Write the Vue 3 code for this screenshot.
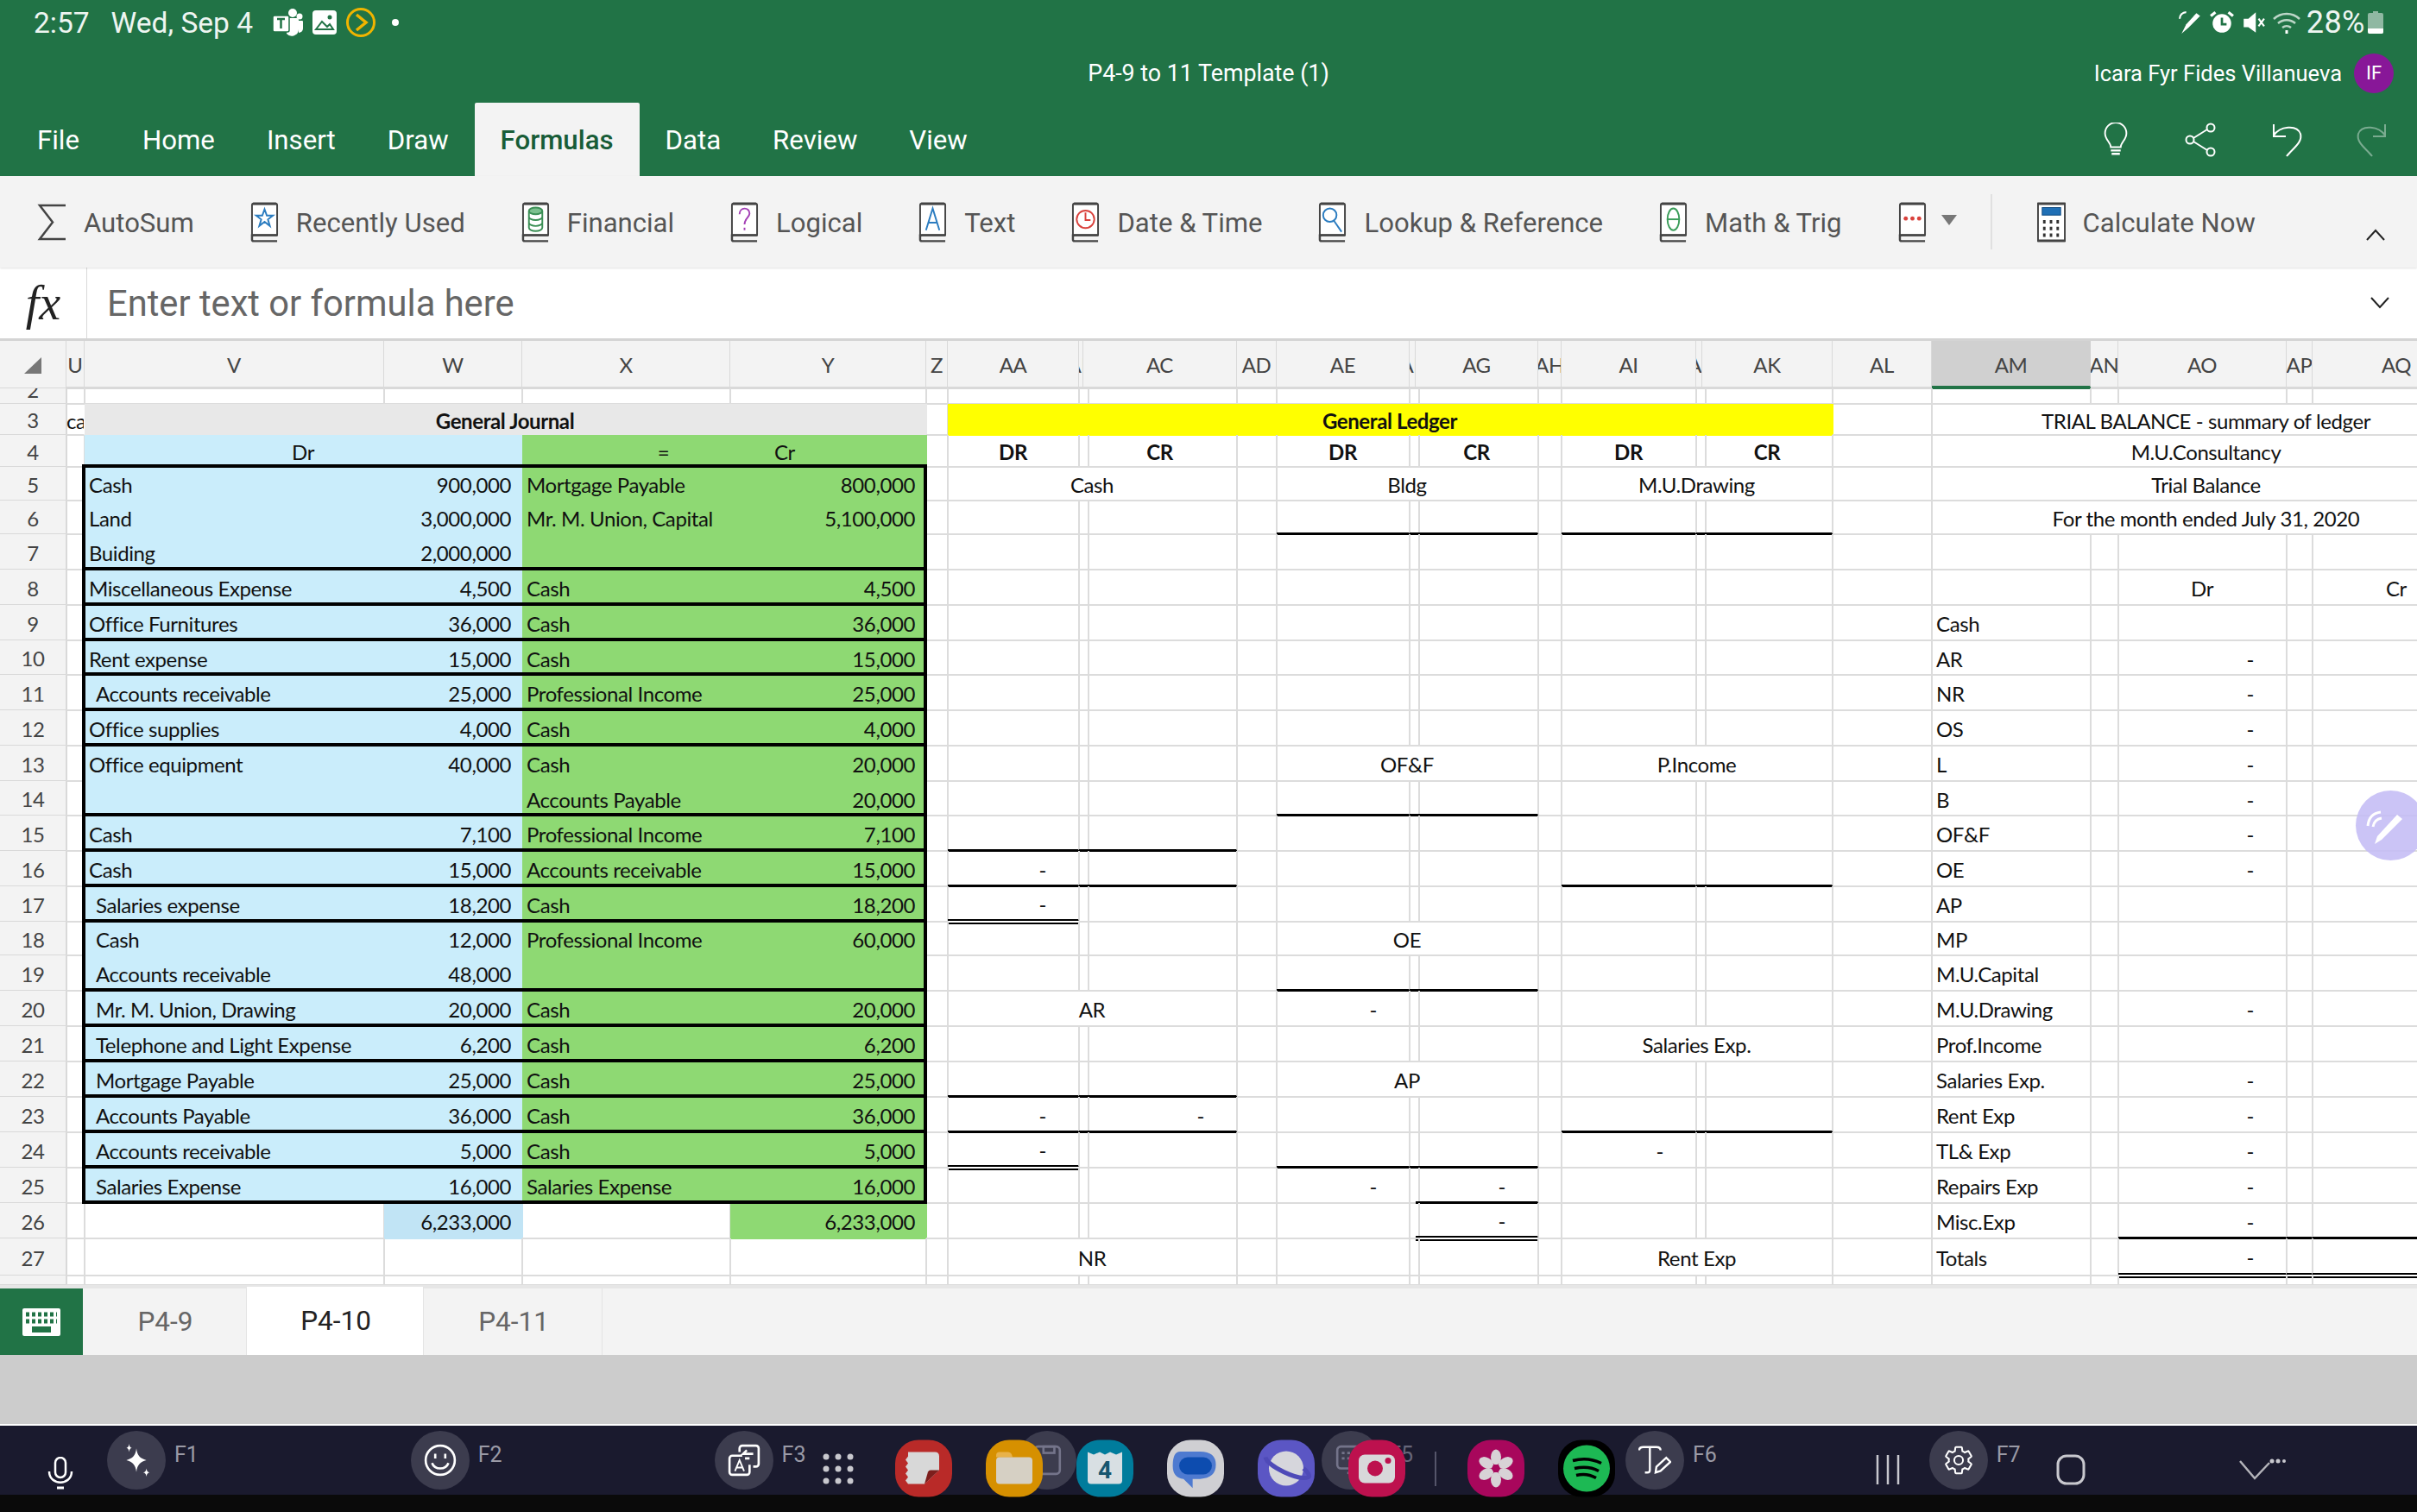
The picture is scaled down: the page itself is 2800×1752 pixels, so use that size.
<template>
  <div class="app">
    <header class="top">
      <div class="status">
        <div class="status-left">
          <span class="time">2:57</span>
          <span class="date">Wed, Sep 4</span>
          <svg class="st-teams" viewBox="0 0 36 34">
            <circle cx="24" cy="6" r="5" fill="#fff" />
            <circle cx="32" cy="10" r="3.5" fill="#fff" />
            <path d="M17 12h12a2 2 0 0 1 2 2v11a8 8 0 0 1-14 5z" fill="#fff" />
            <path d="M30 15h5a1 1 0 0 1 1 1v8a5 5 0 0 1-5 5z" fill="#fff" />
            <rect x="1" y="9" width="19" height="19" rx="2" fill="#fff" stroke="#217346" stroke-width="1.5" />
            <path d="M6 13h9M10.500 13v11" stroke="#217346" stroke-width="2.500" fill="none" />
          </svg>
          <svg class="st-gallery" viewBox="0 0 28 28">
            <rect width="28" height="28" rx="4" fill="#fff" />
            <circle cx="20" cy="8" r="2.500" fill="#217346" />
            <path d="M4 22l7-9 6 6 3-3 4 6z" fill="none" stroke="#217346" stroke-width="2" />
          </svg>
          <svg class="st-play" viewBox="0 0 36 36">
            <circle cx="18" cy="18" r="15.500" fill="none" stroke="#f0b400" stroke-width="3" />
            <path d="M13 9l11 9-11 9" fill="none" stroke="#f0b400" stroke-width="3.500" />
          </svg>
          <span class="st-dot"></span>
        </div>
        <div class="status-right">
          <svg class="st-ico" viewBox="0 0 26 26">
            <path d="M3 25L8 15 19 3l4 3-12 12z" fill="#fff" />
            <path d="M1 9a7 7 0 0 1 7-7" fill="none" stroke="#fff" stroke-width="2" />
          </svg>
          <svg class="st-ico" viewBox="0 0 26 26">
            <circle cx="13" cy="14" r="10" fill="#fff" />
            <path d="M13 8v7h5" fill="none" stroke="#217346" stroke-width="2.500" />
            <path d="M1 6l5-4M25 6l-5-4" stroke="#fff" stroke-width="3" />
          </svg>
          <svg class="st-ico" viewBox="0 0 26 26">
            <path d="M3 9h5l8-7v22l-8-6H3z" fill="#fff" />
            <path d="M19 9l6 8M25 9l-6 8" stroke="#fff" stroke-width="2" />
          </svg>
          <svg class="st-wifi" viewBox="0 0 34 26">
            <path d="M2 9a22 22 0 0 1 30 0M7 14a15 15 0 0 1 20 0M12 19a8 8 0 0 1 10 0" fill="none" stroke="#bcd6c7" stroke-width="2.500" />
            <path d="M17 22v4" stroke="#fff" stroke-width="3" />
          </svg>
          <span class="pct">28%</span>
          <svg class="st-batt" viewBox="0 0 18 26">
            <path d="M6 0h6v2h4a2 2 0 0 1 2 2v20a2 2 0 0 1-2 2H2a2 2 0 0 1-2-2V4a2 2 0 0 1 2-2h4z" fill="#8fb8a2" />
            <path d="M0 20h18v4a2 2 0 0 1-2 2H2a2 2 0 0 1-2-2z" fill="#fff" />
          </svg>
        </div>
      </div>
      <div class="titlebar">
        <div></div>
        <div class="doc-title">P4-9 to 11 Template (1)</div>
        <div class="account">
          <span class="acc-name">Icara Fyr Fides Villanueva</span>
          <span class="avatar">IF</span>
        </div>
      </div>
      <div class="tabrow">
        <nav class="menu">
          <span v-for="tab in menuTabs" :key="tab" :class="['menu-tab', { active: tab === 'Formulas', first: tab === 'File' }]">{{ tab }}</span>
        </nav>
        <div class="quick">
          <svg class="q-ico" viewBox="0 0 32 42">
            <path d="M10 30c0-6-7-9-7-17a13 13 0 0 1 26 0c0 8-7 11-7 17z" fill="none" stroke="#fff" stroke-width="2" />
            <path d="M10 34h12M11 38h10" stroke="#fff" stroke-width="2.500" />
          </svg>
          <svg class="q-ico" viewBox="0 0 40 40">
            <circle cx="31" cy="6" r="4.500" fill="none" stroke="#fff" stroke-width="2" />
            <circle cx="7" cy="20" r="4.500" fill="none" stroke="#fff" stroke-width="2" />
            <circle cx="31" cy="34" r="4.500" fill="none" stroke="#fff" stroke-width="2" />
            <path d="M11 18l16-10M11 22l16 10" stroke="#fff" stroke-width="2" />
          </svg>
          <svg class="q-ico" viewBox="0 0 40 40">
            <path d="M5 2v14h14" fill="none" stroke="#fff" stroke-width="2" />
            <path d="M5 15C12 4 32 2 36 13c3 10-10 18-16 26" fill="none" stroke="#fff" stroke-width="2" />
          </svg>
          <svg class="q-ico dim" viewBox="0 0 40 40">
            <path d="M35 2v14H21" fill="none" stroke="#fff" stroke-width="2" />
            <path d="M35 15C28 4 8 2 4 13c-3 10 10 18 16 26" fill="none" stroke="#fff" stroke-width="2" />
          </svg>
        </div>
      </div>
    </header>

    <section class="ribbon">
      <div class="rib-item">
        <svg class="sigma" viewBox="0 0 34 43">
          <path d="M33 2H3l15 19.500L3 41h30" fill="none" stroke="#444" stroke-width="2.500" />
        </svg>
        <span>AutoSum</span>
      </div>
      <div v-for="item in ribbonItems" :key="item.kind" class="rib-item">
        <svg class="book" viewBox="0 0 34 47">
          <path d="M2 39V3q0-2 2-2h26q2 0 2 2v36z" fill="#fff" stroke="#444" stroke-width="2" />
          <path d="M2 38v6q0 2 2 2h28M32 39H4q-2 0-2 2" fill="none" stroke="#444" stroke-width="2.500" />
          <path d="M3 1.500h28" stroke="#444" stroke-width="3" />
          <path v-if="item.kind === 'recent'" d="M17 8l2.700 7.500H27l-6 4.700 2.300 7.800-6.300-5-6.300 5 2.300-7.800-6-4.700h7.300z" fill="none" stroke="#2b7cc0" stroke-width="2" />
          <g v-else-if="item.kind === 'financial'" fill="none" stroke="#3b8f55" stroke-width="2">
            <ellipse cx="17" cy="10" rx="8" ry="4" fill="#7cc08f" />
            <path d="M9 10v20a8 4 0 0 0 16 0V10M9 17a8 4 0 0 0 16 0M9 24a8 4 0 0 0 16 0" />
          </g>
          <g v-else-if="item.kind === 'logical'" fill="none" stroke="#a33fb5" stroke-width="2">
            <path d="M11 14c0-9 12-9 12-1 0 5-6 6-6 13" />
            <path d="M17 30v3" />
          </g>
          <path v-else-if="item.kind === 'text'" d="M9 33L17 7l8 26M12 24h10" fill="none" stroke="#2b7cc0" stroke-width="2" />
          <g v-else-if="item.kind === 'date'" fill="none" stroke="#d9423d" stroke-width="2">
            <circle cx="17" cy="20" r="10.500" />
            <path d="M17 12v9h6" />
          </g>
          <g v-else-if="item.kind === 'lookup'" fill="none" stroke="#2b7cc0" stroke-width="2">
            <circle cx="14" cy="15" r="8" />
            <path d="M19 22l9 13" />
          </g>
          <g v-else-if="item.kind === 'math'" fill="none" stroke="#3b9d5a" stroke-width="2">
            <ellipse cx="17" cy="20" rx="7" ry="13" />
            <path d="M10 20h14" />
          </g>
          <g v-else-if="item.kind === 'more'" fill="#d9423d">
            <circle cx="9" cy="19" r="2.500" />
            <circle cx="17" cy="19" r="2.500" />
            <circle cx="25" cy="19" r="2.500" />
          </g>
        </svg>
        <span v-if="item.label">{{ item.label }}</span>
      </div>
      <svg class="caret" viewBox="0 0 18 12"><path d="M0 0h18l-9 12z" fill="#777" /></svg>
      <span class="rib-div"></span>
      <div class="rib-item">
        <svg class="book" viewBox="0 0 34 47">
          <rect x="1" y="1" width="32" height="45" fill="#fff" stroke="#444" stroke-width="2" />
          <path d="M1 1.500h32M1 45.500h32" stroke="#444" stroke-width="3" />
          <rect x="6" y="6" width="22" height="9" fill="#1f6fb5" stroke="#104a80" />
          <path d="M7 23h20M7 31h20M7 39h20" stroke="#333" stroke-width="4" stroke-dasharray="3 5" />
        </svg>
        <span>Calculate Now</span>
      </div>
      <svg class="collapse" viewBox="0 0 24 14"><path d="M2 13L12 2l10 11" fill="none" stroke="#222" stroke-width="2" /></svg>
    </section>

    <section class="formula">
      <div class="fx">fx</div>
      <div class="formula-input">Enter text or formula here</div>
      <svg class="expand" viewBox="0 0 24 14"><path d="M2 1l10 11L22 1" fill="none" stroke="#222" stroke-width="2" /></svg>
    </section>

    <main class="sheet">
      <div class="grid">
        <div class="corner"><svg viewBox="0 0 20 19"><path d="M0 19L20 0v19z" fill="#777" /></svg></div>
        <div v-for="col in columns" :key="col.name" :class="['col-head', { selected: col.name === 'AM' }]">{{ col.name }}</div>
        <template v-for="row in rows" :key="row.num">
          <div :class="['row-head', { clipped: row.num === 2 }]">{{ row.num === 28 ? '' : row.num }}</div>
          <div
            v-for="cell in row.cells"
            :key="cell.col"
            :class="['cell', cell.cls]"
            :style="cell.span > 1 ? { gridColumn: 'span ' + cell.span } : null"
          >{{ cell.text }}</div>
        </template>
        <div
          v-for="b in blocks"
          :key="b[0]"
          class="block"
          :style="{ gridRow: b[0] + ' / ' + (b[1] + 1), gridColumn: '3 / 7' }"
        ></div>
      </div>
      <div class="pen-float">
        <svg viewBox="0 0 50 50">
          <path d="M10 46l3-9L36 12l6 5-24 24z" fill="#fff" />
          <path d="M2 25C3 15 8 10 17 9M8 26c1-6 4-9 10-10" fill="none" stroke="#fff" stroke-width="3" />
        </svg>
      </div>
    </main>

    <footer class="sheetbar">
      <div class="kbd-btn">
        <svg viewBox="0 0 44 32">
          <rect width="44" height="32" rx="2" fill="#fff" />
          <path d="M4 7h36M4 15h36" stroke="#217346" stroke-width="5" stroke-dasharray="4 3" />
          <rect x="11" y="21" width="22" height="7" fill="#217346" />
        </svg>
      </div>
      <div class="sheet-tab">P4-9</div>
      <div class="sheet-tab current">P4-10</div>
      <div class="sheet-tab">P4-11</div>
    </footer>

    <div class="gap"></div>

    <div class="sysbar">
      <div class="fkeys">
        <svg class="mic" viewBox="0 0 30 38">
          <rect x="9" y="1" width="12" height="23" rx="6" fill="none" stroke="#fff" stroke-width="2.500" />
          <path d="M2 17c0 17 26 17 26 0" fill="none" stroke="#fff" stroke-width="2.500" />
          <path d="M11 36h8" stroke="#fff" stroke-width="3" />
        </svg>
        <div class="fkey">
          <span class="fcircle">
            <svg viewBox="0 0 36 36" fill="#fff">
              <path d="M18 5c1 8 4 11 11 13-7 2-10 5-11 13-1-8-4-11-11-13 7-2 10-5 11-13z" />
              <path d="M10 0c.4 3 1 4 3 4.500-2 .5-2.600 1.500-3 4.500-.4-3-1-4-3-4.500 2-.5 2.600-1.500 3-4.500zM29 27c.4 3 1.200 4 3.500 4.500-2.300.5-3.100 1.500-3.500 4.500-.4-3-1.200-4-3.500-4.500 2.300-.5 3.100-1.500 3.500-4.500z" />
            </svg>
          </span>
          <span class="flabel">F1</span>
        </div>
        <div class="fkey">
          <span class="fcircle">
            <svg viewBox="0 0 36 36" fill="none" stroke="#fff" stroke-width="2.500">
              <circle cx="18" cy="18" r="16" />
              <path d="M9 21c3 8 15 8 18 0" />
              <path d="M12.500 11v5M23.500 11v5" />
            </svg>
          </span>
          <span class="flabel">F2</span>
        </div>
        <div class="fkey">
          <span class="fcircle">
            <svg viewBox="0 0 36 36" fill="none" stroke="#fff" stroke-width="2.500">
              <path d="M13 9V5a3 3 0 0 1 3-3h15a3 3 0 0 1 3 3v17a3 3 0 0 1-3 3h-3" />
              <path d="M16 13H5a3 3 0 0 0-3 3v15a3 3 0 0 0 3 3h16a3 3 0 0 0 3-3v-8" />
              <path d="M28 11H17l4-4M24 16h-5" />
              <path d="M8 30l5-12 5 12M10 26h6" stroke-width="1.800" />
            </svg>
          </span>
          <span class="flabel">F3</span>
        </div>
        <div class="fkey muted">
          <span class="fcircle">
            <svg viewBox="0 0 36 36" fill="none" stroke="#74748a" stroke-width="2.500">
              <rect x="4" y="3" width="28" height="30" rx="4" />
              <rect x="14" y="3" width="12" height="7" />
            </svg>
          </span>
          <span class="flabel">F4</span>
        </div>
        <div class="fkey muted">
          <span class="fcircle">
            <svg viewBox="0 0 36 36" fill="none" stroke="#74748a" stroke-width="2.500">
              <rect x="3" y="3" width="30" height="24" rx="4" />
              <path d="M8 10h20M8 16h20" stroke-dasharray="3 3" />
              <path d="M14 32h8" />
            </svg>
          </span>
          <span class="flabel">F5</span>
        </div>
        <div class="fkey">
          <span class="fcircle">
            <svg viewBox="0 0 40 36" fill="none" stroke="#fff" stroke-width="2.500">
              <path d="M1 6c0-3 2-4 5-4h16c3 0 5 1 5 4M14 2v28c0 2-1 3-3 3H8" />
              <path d="M21 33l1-7 12-11 5 5-12 11z" />
            </svg>
          </span>
          <span class="flabel">F6</span>
        </div>
        <div class="fkey">
          <span class="fcircle">
            <svg viewBox="0 0 24 24" fill="none" stroke="#fff" stroke-width="1.300">
              <path d="M19.140 12.940c.04-.3.06-.61.06-.94 0-.32-.02-.64-.07-.94l2.030-1.580a.49.49 0 0 0 .12-.61l-1.920-3.320a.488.488 0 0 0-.59-.22l-2.390.96c-.5-.38-1.030-.7-1.620-.94l-.36-2.540a.484.484 0 0 0-.48-.41h-3.840c-.24 0-.43.17-.47.41l-.36 2.540c-.59.24-1.130.57-1.620.94l-2.390-.96c-.22-.08-.47 0-.59.22L2.740 8.870c-.12.21-.08.47.12.61l2.030 1.580c-.05.3-.09.63-.09.94s.02.64.07.94l-2.030 1.580a.49.49 0 0 0-.12.61l1.920 3.320c.12.22.37.29.59.22l2.390-.96c.5.38 1.030.7 1.620.94l.36 2.540c.05.24.24.41.48.41h3.840c.24 0 .44-.17.47-.41l.36-2.540c.59-.24 1.130-.56 1.620-.94l2.390.96c.22.08.47 0 .59-.22l1.920-3.320c.12-.22.07-.47-.12-.61l-2.010-1.580z" />
              <circle cx="12" cy="12" r="3.200" />
            </svg>
          </span>
          <span class="flabel">F7</span>
        </div>
      </div>

      <div class="dock">
        <svg class="dots" viewBox="0 0 36 36" fill="#c8c8ce">
          <template v-for="y in [4, 18, 32]" :key="y">
            <circle cx="4" :cy="y" r="3.500" />
            <circle cx="18" :cy="y" r="3.500" />
            <circle cx="32" :cy="y" r="3.500" />
          </template>
        </svg>
        <svg class="app-ico" viewBox="0 0 66 66">
          <rect width="66" height="66" rx="27" fill="#b92a28" />
          <path d="M15 14h31q5 0 5 5v16L34 51H15l-3-4 3-4-3-4 3-4-3-4 3-4-3-4 3-4z" fill="#d8d8d8" />
          <path d="M34 51l4-14q1-2 3-2h10z" fill="#7d1e1c" />
        </svg>
        <svg class="app-ico" viewBox="0 0 66 66">
          <rect width="66" height="66" rx="27" fill="#d69000" />
          <path d="M12 18q0-4 4-4h10q4 0 5 6h-19z" fill="#e8b24a" />
          <rect x="12" y="20" width="42" height="31" rx="4" fill="#d6d0c4" />
        </svg>
        <svg class="app-ico" viewBox="0 0 66 66">
          <rect width="66" height="66" rx="27" fill="#007c9c" />
          <path d="M13 14l7 3 7-3 6 3 6-3 7 3 7-3v33q0 4-4 4H17q-4 0-4-4z" fill="#d8dfe3" />
          <text x="33" y="44" text-anchor="middle" class="cal-num">4</text>
        </svg>
        <svg class="app-ico" viewBox="0 0 66 66">
          <rect width="66" height="66" rx="27" fill="#cfcfd3" />
          <path d="M19 13h24q19 0 19 16t-19 17H34v11l-11-11q-13-1-13-16 0-17 9-17z" transform="translate(-3 1) scale(.96)" fill="#4e7ad0" />
          <rect x="14" y="20" width="38" height="20" rx="10" fill="#0d4caf" />
        </svg>
        <svg class="app-ico" viewBox="0 0 66 66">
          <rect width="66" height="66" rx="27" fill="#5b56c4" />
          <circle cx="33" cy="33" r="20" fill="#d6d6dc" />
          <path d="M9 20c2 10 38 28 50 23 2-2-2-7-6-10" fill="none" stroke="#4f4ab8" stroke-width="5" />
        </svg>
        <svg class="app-ico" viewBox="0 0 66 66">
          <rect width="66" height="66" rx="27" fill="#bd114e" />
          <rect x="12" y="17" width="42" height="33" rx="7" fill="#d8d8da" />
          <circle cx="31" cy="33" r="9" fill="#bd114e" />
          <circle cx="46" cy="24" r="3.500" fill="#bd114e" />
        </svg>
        <span class="dock-div"></span>
        <svg class="app-ico" viewBox="0 0 66 66">
          <rect width="66" height="66" rx="27" fill="#a8075c" />
          <g fill="#d8d2d6">
            <ellipse v-for="a in [0, 60, 120, 180, 240, 300]" :key="a" cx="33" cy="20" rx="6" ry="9" :transform="'rotate(' + a + ' 33 33)'" />
          </g>
          <circle cx="33" cy="33" r="4.500" fill="#a8075c" />
        </svg>
        <svg class="app-ico" viewBox="0 0 66 66">
          <rect width="66" height="66" rx="27" fill="#000" />
          <circle cx="33" cy="33" r="27" fill="#1db954" />
          <path d="M17 24c11-3 23-2 33 3M19 33c9-2 19-2 28 3M21 41c8-2 16-1 23 3" fill="none" stroke="#000" stroke-width="3.500" />
        </svg>
        <svg class="nav-recent" viewBox="0 0 30 36">
          <path d="M3 1v34M15 1v34M27 1v34" stroke="#c8c8ce" stroke-width="2.500" />
        </svg>
        <svg class="nav-home" viewBox="0 0 34 36">
          <rect x="2" y="2" width="30" height="32" rx="10" fill="none" stroke="#c8c8ce" stroke-width="3" />
        </svg>
        <svg class="nav-back" viewBox="0 0 54 26">
          <path d="M1 3l17 20L35 5" fill="none" stroke="#b4b4ba" stroke-width="2.500" />
          <circle cx="38" cy="3" r="2.500" fill="#c8c8ce" />
          <circle cx="45" cy="3" r="2.500" fill="#c8c8ce" />
          <circle cx="52" cy="3" r="2" fill="#c8c8ce" />
        </svg>
      </div>
    </div>
  </div>
</template>

<script setup>
const menuTabs = ['File', 'Home', 'Insert', 'Draw', 'Formulas', 'Data', 'Review', 'View']

const ribbonItems = [
  { kind: 'recent', label: 'Recently Used' },
  { kind: 'financial', label: 'Financial' },
  { kind: 'logical', label: 'Logical' },
  { kind: 'text', label: 'Text' },
  { kind: 'date', label: 'Date & Time' },
  { kind: 'lookup', label: 'Lookup & Reference' },
  { kind: 'math', label: 'Math & Trig' },
  { kind: 'more', label: '' }
]

const columns = [
  { name: 'U', w: 21 }, { name: 'V', w: 347 }, { name: 'W', w: 160 }, { name: 'X', w: 241 },
  { name: 'Y', w: 227 }, { name: 'Z', w: 25 }, { name: 'AA', w: 152 }, { name: 'AB', w: 5 },
  { name: 'AC', w: 178 }, { name: 'AD', w: 46 }, { name: 'AE', w: 154 }, { name: 'AF', w: 7 },
  { name: 'AG', w: 142 }, { name: 'AH', w: 27 }, { name: 'AI', w: 156 }, { name: 'AJ', w: 7 },
  { name: 'AK', w: 151 }, { name: 'AL', w: 115 }, { name: 'AM', w: 184 }, { name: 'AN', w: 32 },
  { name: 'AO', w: 195 }, { name: 'AP', w: 30 }, { name: 'AQ', w: 195 }
]
const colNames = columns.map(c => c.name)

const rowHeights = {
  2: 18, 3: 36, 4: 37, 5: 39, 6: 39, 7: 41, 8: 41, 9: 41, 10: 40, 11: 41, 12: 41, 13: 41, 14: 40,
  15: 41, 16: 41, 17: 41, 18: 39, 19: 41, 20: 41, 21: 41, 22: 41, 23: 41, 24: 41, 25: 41, 26: 41, 27: 43, 28: 11
}

const gridCols = '77px ' + columns.map(c => c.w + 'px').join(' ')
const gridRows = '55px ' + Object.values(rowHeights).map(h => h + 'px').join(' ')

// sheet contents, keyed by "row:col"
const sheet = {}
const put = (row, col, patch) => {
  const key = row + ':' + col
  sheet[key] = { ...sheet[key], ...patch, cls: [sheet[key]?.cls, patch.cls].filter(Boolean).join(' ') }
}

// general journal: label, amount, label, amount, indent
const journal = [
  [5, 'Cash', '900,000', 'Mortgage Payable', '800,000'],
  [6, 'Land', '3,000,000', 'Mr. M. Union, Capital', '5,100,000'],
  [7, 'Buiding', '2,000,000', '', ''],
  [8, 'Miscellaneous Expense', '4,500', 'Cash', '4,500'],
  [9, 'Office Furnitures', '36,000', 'Cash', '36,000'],
  [10, 'Rent expense', '15,000', 'Cash', '15,000'],
  [11, 'Accounts receivable', '25,000', 'Professional Income', '25,000', true],
  [12, 'Office supplies', '4,000', 'Cash', '4,000'],
  [13, 'Office equipment', '40,000', 'Cash', '20,000'],
  [14, '', '', 'Accounts Payable', '20,000'],
  [15, 'Cash', '7,100', 'Professional Income', '7,100'],
  [16, 'Cash', '15,000', 'Accounts receivable', '15,000'],
  [17, 'Salaries expense', '18,200', 'Cash', '18,200', true],
  [18, 'Cash', '12,000', 'Professional Income', '60,000', true],
  [19, 'Accounts receivable', '48,000', '', '', true],
  [20, 'Mr. M. Union, Drawing', '20,000', 'Cash', '20,000', true],
  [21, 'Telephone and Light Expense', '6,200', 'Cash', '6,200', true],
  [22, 'Mortgage Payable', '25,000', 'Cash', '25,000', true],
  [23, 'Accounts Payable', '36,000', 'Cash', '36,000', true],
  [24, 'Accounts receivable', '5,000', 'Cash', '5,000', true],
  [25, 'Salaries Expense', '16,000', 'Salaries Expense', '16,000', true]
]
journal.forEach(([r, a, b, c, d, indent]) => {
  put(r, 'V', { text: a, cls: 'blue' + (indent ? ' indent' : '') })
  put(r, 'W', { text: b, cls: 'blue right' })
  put(r, 'X', { text: c, cls: 'green' })
  put(r, 'Y', { text: d, cls: 'green right' })
})

put(3, 'U', { text: 'ca', cls: 'flush' })
put(3, 'V', { text: 'General Journal', span: 4, cls: 'grey bold center' })
put(4, 'V', { text: 'Dr', span: 2, cls: 'blue center' })
put(4, 'X', { text: '=', cls: 'green eq' })
put(4, 'Y', { text: 'Cr', cls: 'green cr-head' })
put(26, 'W', { text: '6,233,000', cls: 'total-blue right' })
put(26, 'Y', { text: '6,233,000', cls: 'green right' })

// general ledger
put(3, 'AA', { text: 'General Ledger', span: 11, cls: 'yellow bold center' })
;['AA', 'AC', 'AE', 'AG', 'AI', 'AK'].forEach((c, i) => {
  put(4, c, { text: i % 2 ? 'CR' : 'DR', cls: 'bold center' })
})
const accounts = [
  [5, 'AA', 'Cash'], [5, 'AE', 'Bldg'], [5, 'AI', 'M.U.Drawing'], [13, 'AE', 'OF&F'], [13, 'AI', 'P.Income'],
  [18, 'AE', 'OE'], [20, 'AA', 'AR'], [21, 'AI', 'Salaries Exp.'], [22, 'AE', 'AP'], [27, 'AA', 'NR'], [27, 'AI', 'Rent Exp']
]
accounts.forEach(([r, c, text]) => put(r, c, { text, span: 3, cls: 'center' }))

const dashes = [
  [16, 'AA'], [17, 'AA'], [20, 'AE'], [23, 'AA'], [23, 'AC'], [24, 'AA'], [24, 'AI'], [25, 'AE'], [25, 'AG'], [26, 'AG'],
  ...[10, 11, 12, 13, 14, 15, 16, 20, 22, 23, 24, 25, 26, 27].map(r => [r, 'AO'])
]
dashes.forEach(([r, c]) => put(r, c, { text: '-', cls: 'dash' }))

// rules under ledger rows
const rule = (row, from, to, cls) => {
  const a = colNames.indexOf(from)
  const b = colNames.indexOf(to)
  colNames.slice(a, b + 1).forEach(c => put(row, c, { cls }))
}
rule(6, 'AE', 'AG', 'line')
rule(6, 'AI', 'AK', 'line')
rule(14, 'AE', 'AG', 'line')
rule(15, 'AA', 'AC', 'line')
rule(16, 'AA', 'AC', 'line')
rule(16, 'AI', 'AK', 'line')
rule(17, 'AA', 'AA', 'double')
rule(19, 'AE', 'AG', 'line')
rule(22, 'AA', 'AC', 'line')
rule(23, 'AA', 'AC', 'line')
rule(23, 'AI', 'AK', 'line')
rule(24, 'AA', 'AA', 'double')
rule(24, 'AE', 'AG', 'line')
rule(25, 'AG', 'AG', 'line')
rule(26, 'AG', 'AG', 'double')
rule(26, 'AO', 'AQ', 'line')
rule(27, 'AO', 'AQ', 'double')

// trial balance
;[[3, 'TRIAL BALANCE - summary of ledger'], [4, 'M.U.Consultancy'], [5, 'Trial Balance'], [6, 'For the month ended July 31, 2020']]
  .forEach(([r, text]) => put(r, 'AM', { text, span: 5, cls: 'center' }))
put(8, 'AO', { text: 'Dr', cls: 'center' })
put(8, 'AQ', { text: 'Cr', cls: 'center' })
;['Cash', 'AR', 'NR', 'OS', 'L', 'B', 'OF&F', 'OE', 'AP', 'MP', 'M.U.Capital', 'M.U.Drawing', 'Prof.Income',
  'Salaries Exp.', 'Rent Exp', 'TL& Exp', 'Repairs Exp', 'Misc.Exp', 'Totals'].forEach((text, i) => put(9 + i, 'AM', { text }))

const rows = Object.keys(rowHeights).map(Number).map(num => {
  const cells = []
  for (let i = 0; i < colNames.length;) {
    const col = colNames[i]
    const c = sheet[num + ':' + col] || {}
    const span = c.span || 1
    cells.push({ col, span, text: c.text || '', cls: c.cls || '' })
    i += span
  }
  return { num, cells }
})

// rows framed in black in the journal; the grid line number equals the sheet row number
const blocks = [[5, 7], [8, 8], [9, 9], [10, 10], [11, 11], [12, 12], [13, 14], [15, 15], [16, 16], [17, 17],
  [18, 19], [20, 20], [21, 21], [22, 22], [23, 23], [24, 24], [25, 25]]
</script>

<style>
html,
body {
  margin: 0;
  background: #fff;
}
</style>

<style scoped>
.app {
  width: 2800px;
  height: 1752px;
  overflow: hidden;
  display: flex;
  flex-direction: column;
  font-family: Roboto, "Liberation Sans", sans-serif;
  position: relative;
}

.top {
  height: 204px;
  background: #217346;
  color: #fff;
  flex: none;
  display: flex;
  flex-direction: column;
}

.status {
  height: 52px;
  display: flex;
  justify-content: space-between;
  align-items: center;
  font-size: 33.500px;
  color: #eef5f1;
}

.status-left {
  display: flex;
  align-items: center;
  padding-left: 39px;
}

.time {
  margin-right: 25px;
}

.st-teams {
  width: 36px;
  height: 34px;
  margin-left: 22px;
}

.st-gallery {
  width: 28px;
  height: 28px;
  margin-left: 11px;
}

.st-play {
  width: 36px;
  height: 36px;
  margin-left: 10px;
}

.st-dot {
  width: 8px;
  height: 8px;
  border-radius: 50%;
  background: #fff;
  margin-left: 18px;
}

.status-right {
  display: flex;
  align-items: center;
  padding-right: 39px;
}

.st-ico {
  width: 28px;
  height: 28px;
  margin-right: 8px;
}

.st-wifi {
  width: 34px;
  height: 26px;
  margin-right: 6px;
}

.pct {
  font-size: 36px;
  letter-spacing: 0.5px;
}

.st-batt {
  width: 18px;
  height: 26px;
  margin-left: 3px;
}

.titlebar {
  height: 65px;
  margin-bottom: 2px;
  display: grid;
  grid-template-columns: 1fr auto 1fr;
  align-items: center;
}

.doc-title {
  font-size: 26.800px;
}

.account {
  display: flex;
  justify-content: flex-end;
  align-items: center;
  padding-right: 27px;
  gap: 14px;
  font-size: 25.500px;
}

.avatar {
  width: 46px;
  height: 46px;
  border-radius: 50%;
  background: #881798;
  display: flex;
  align-items: center;
  justify-content: center;
  font-size: 22px;
}

.tabrow {
  flex: 1;
  display: flex;
  justify-content: space-between;
}

.menu {
  display: flex;
  padding-left: 13px;
  font-size: 31.200px;
}

.menu-tab {
  padding: 2px 30px 0;
  display: flex;
  align-items: center;
}

.menu-tab.first {
  margin-right: 13px;
}

.menu-tab.active {
  background: #f3f3f3;
  color: #185c37;
  font-weight: 500;
  border-radius: 2px 2px 0 0;
}

.quick {
  display: flex;
  align-items: center;
  padding-right: 32px;
  gap: 59px;
}

.q-ico {
  width: 40px;
  height: 40px;
}

.q-ico.dim {
  opacity: 0.4;
}

.ribbon {
  height: 106px;
  flex: none;
  background: #f3f3f3;
  display: flex;
  align-items: center;
  padding-left: 43px;
  gap: 65px;
  position: relative;
  box-shadow: 0 1px 2px rgba(0, 0, 0, 0.12);
  z-index: 1;
  font-size: 31.100px;
  color: #555;
  box-sizing: border-box;
}

.rib-item {
  display: flex;
  align-items: center;
  gap: 20px;
  flex: none;
}

.rib-item span {
  padding-top: 3px;
}

.sigma {
  width: 34px;
  height: 43px;
}

.book {
  width: 33px;
  height: 47px;
}

.caret {
  width: 18px;
  height: 12px;
  margin-left: -48px;
  margin-bottom: 4px;
}

.rib-div {
  width: 2px;
  height: 64px;
  background: #e0e0e0;
  margin: 0 -13px 0 -26px;
}

.collapse {
  width: 24px;
  height: 14px;
  position: absolute;
  right: 36px;
  top: 61px;
}

.formula {
  height: 85px;
  box-sizing: border-box;
  flex: none;
  background: #fff;
  border-bottom: 3px solid #d4d4d4;
  display: flex;
  align-items: center;
}

.fx {
  width: 101px;
  height: 100%;
  box-sizing: border-box;
  border-right: 1px solid #d9d9d9;
  font-family: "Liberation Serif", serif;
  font-style: italic;
  font-size: 56px;
  color: #222;
  display: flex;
  align-items: center;
  justify-content: center;
}

.formula-input {
  flex: 1;
  padding-left: 23px;
  font-size: 41.700px;
  color: #666;
}

.expand {
  width: 24px;
  height: 14px;
  margin-right: 31px;
}

.sheet {
  height: 1094px;
  flex: none;
  overflow: hidden;
  position: relative;
  background: #fff;
}

.grid {
  display: grid;
  position: relative;
  width: max-content;
  grid-template-columns: v-bind(gridCols);
  grid-template-rows: v-bind(gridRows);
  font-family: Lato, "Liberation Sans", sans-serif;
  font-size: 24px;
  letter-spacing: -0.4px;
  color: #111;
}

.corner,
.col-head,
.row-head {
  background: #f3f3f3;
  color: #444;
  display: flex;
  align-items: center;
  justify-content: center;
  box-sizing: border-box;
  overflow: hidden;
  white-space: nowrap;
  padding-top: 2px;
  margin: 0 -1px -1px 0;
  border-right: 2px solid #d9d9d9;
  border-bottom: 2px solid #d9d9d9;
}

.corner svg {
  width: 20px;
  height: 19px;
}

.col-head {
  border-bottom-width: 3px;
}

.col-head.selected {
  background: #d0d0d0;
  border-right-color: #d0d0d0;
  border-bottom: 4px solid #217346;
}

.row-head.clipped {
  align-items: flex-start;
  line-height: 4px;
  padding-top: 0;
}

.cell {
  display: flex;
  align-items: center;
  box-sizing: border-box;
  white-space: nowrap;
  overflow: hidden;
  padding: 3px 5px 0;
  margin: 0 -1px -1px 0;
  border-right: 2px solid #dcdcdc;
  border-bottom: 2px solid #dcdcdc;
}

.flush {
  padding-left: 0;
  padding-right: 0;
  border-right-color: transparent;
}

.indent {
  padding-left: 13px;
}

.right {
  justify-content: flex-end;
  padding-right: 12px;
}

.center {
  justify-content: center;
}

.bold {
  font-weight: 700;
}

.dash {
  justify-content: flex-end;
  padding-right: 37px;
}

.blue,
.green,
.grey,
.yellow,
.total-blue {
  border-color: transparent;
}

.blue {
  background: #caedfb;
}

.total-blue {
  background: #c1e4f5;
}

.green {
  background: #8ed973;
}

.grey {
  background: #e8e8e8;
}

.yellow {
  background: #ffff00;
}

.eq {
  justify-content: center;
  padding-left: 92px;
}

.cr-head {
  justify-content: center;
  padding-right: 105px;
}

.line {
  border-bottom: 3px solid #000;
  margin-bottom: -1px;
}

.double {
  border-bottom: 6px double #000;
  margin-bottom: -3px;
}

.block {
  position: absolute;
  inset: -3px -1px -1px -3px;
  border: 4px solid #000;
  pointer-events: none;
}

.pen-float {
  position: absolute;
  left: 2729px;
  top: 521px;
  width: 81px;
  height: 81px;
  border-radius: 50%;
  background: rgba(196, 188, 245, 0.88);
  display: flex;
  align-items: center;
  justify-content: center;
}

.pen-float svg {
  width: 50px;
  height: 50px;
  margin-right: 8px;
}

.sheetbar {
  height: 81px;
  box-sizing: border-box;
  flex: none;
  border-top: 4px solid #e6e6e6;
  background: #f3f3f3;
  display: flex;
  font-size: 31.500px;
  color: #666;
}

.kbd-btn {
  width: 96px;
  background: #217346;
  display: flex;
  align-items: center;
  justify-content: center;
}

.kbd-btn svg {
  width: 44px;
  height: 32px;
}

.sheet-tab {
  width: 190px;
  display: flex;
  align-items: center;
  justify-content: center;
  padding-left: 2px;
  border-right: 1px solid #e4e4e4;
  box-sizing: border-box;
}

.sheet-tab.current {
  width: 205px;
  background: #fff;
  color: #222;
  margin-top: -2px;
}

.sheet-tab:last-child {
  width: 207px;
}

.gap {
  height: 80px;
  flex: none;
  background: #cccccc;
  border-bottom: 2px solid #fff;
}

.sysbar {
  flex: 1;
  position: relative;
  background: #0a0a0a;
}

.fkeys {
  height: 80px;
  box-sizing: border-box;
  background: #1a1a2e;
  display: flex;
  padding: 6px 0 0 55px;
}

.mic {
  width: 30px;
  height: 38px;
  margin: 30px 39px 0 0;
}

.fkey {
  width: 351.800px;
  flex: none;
  display: flex;
  align-items: flex-start;
  gap: 10px;
  color: #9a9aa6;
  font-size: 25px;
}

.fcircle {
  width: 68px;
  height: 68px;
  border-radius: 50%;
  background: #3c3c4e;
  display: flex;
  align-items: center;
  justify-content: center;
}

.fcircle svg {
  width: 38px;
  height: 38px;
}

.flabel {
  line-height: 56px;
}

.muted .flabel {
  color: #66667a;
}

.dock {
  position: absolute;
  left: 953px;
  top: 16px;
  display: flex;
  align-items: flex-start;
}

.dots {
  width: 36px;
  height: 36px;
  margin: 16px 48px 0 0;
}

.app-ico {
  width: 66px;
  height: 67px;
  margin-right: 39px;
  flex: none;
}

.dock-div {
  width: 2px;
  height: 40px;
  background: #55556a;
  margin: 14px 36px 0 -5px;
}

.cal-num {
  font-family: Roboto, sans-serif;
  font-size: 28px;
  font-weight: 700;
  fill: #17566f;
}

.nav-recent {
  width: 30px;
  height: 36px;
  margin: 17px 180px 0 262px;
}

.nav-home {
  width: 34px;
  height: 36px;
  margin: 17px 178px 0 0;
}

.nav-back {
  width: 54px;
  height: 26px;
  margin-top: 22px;
}
</style>
